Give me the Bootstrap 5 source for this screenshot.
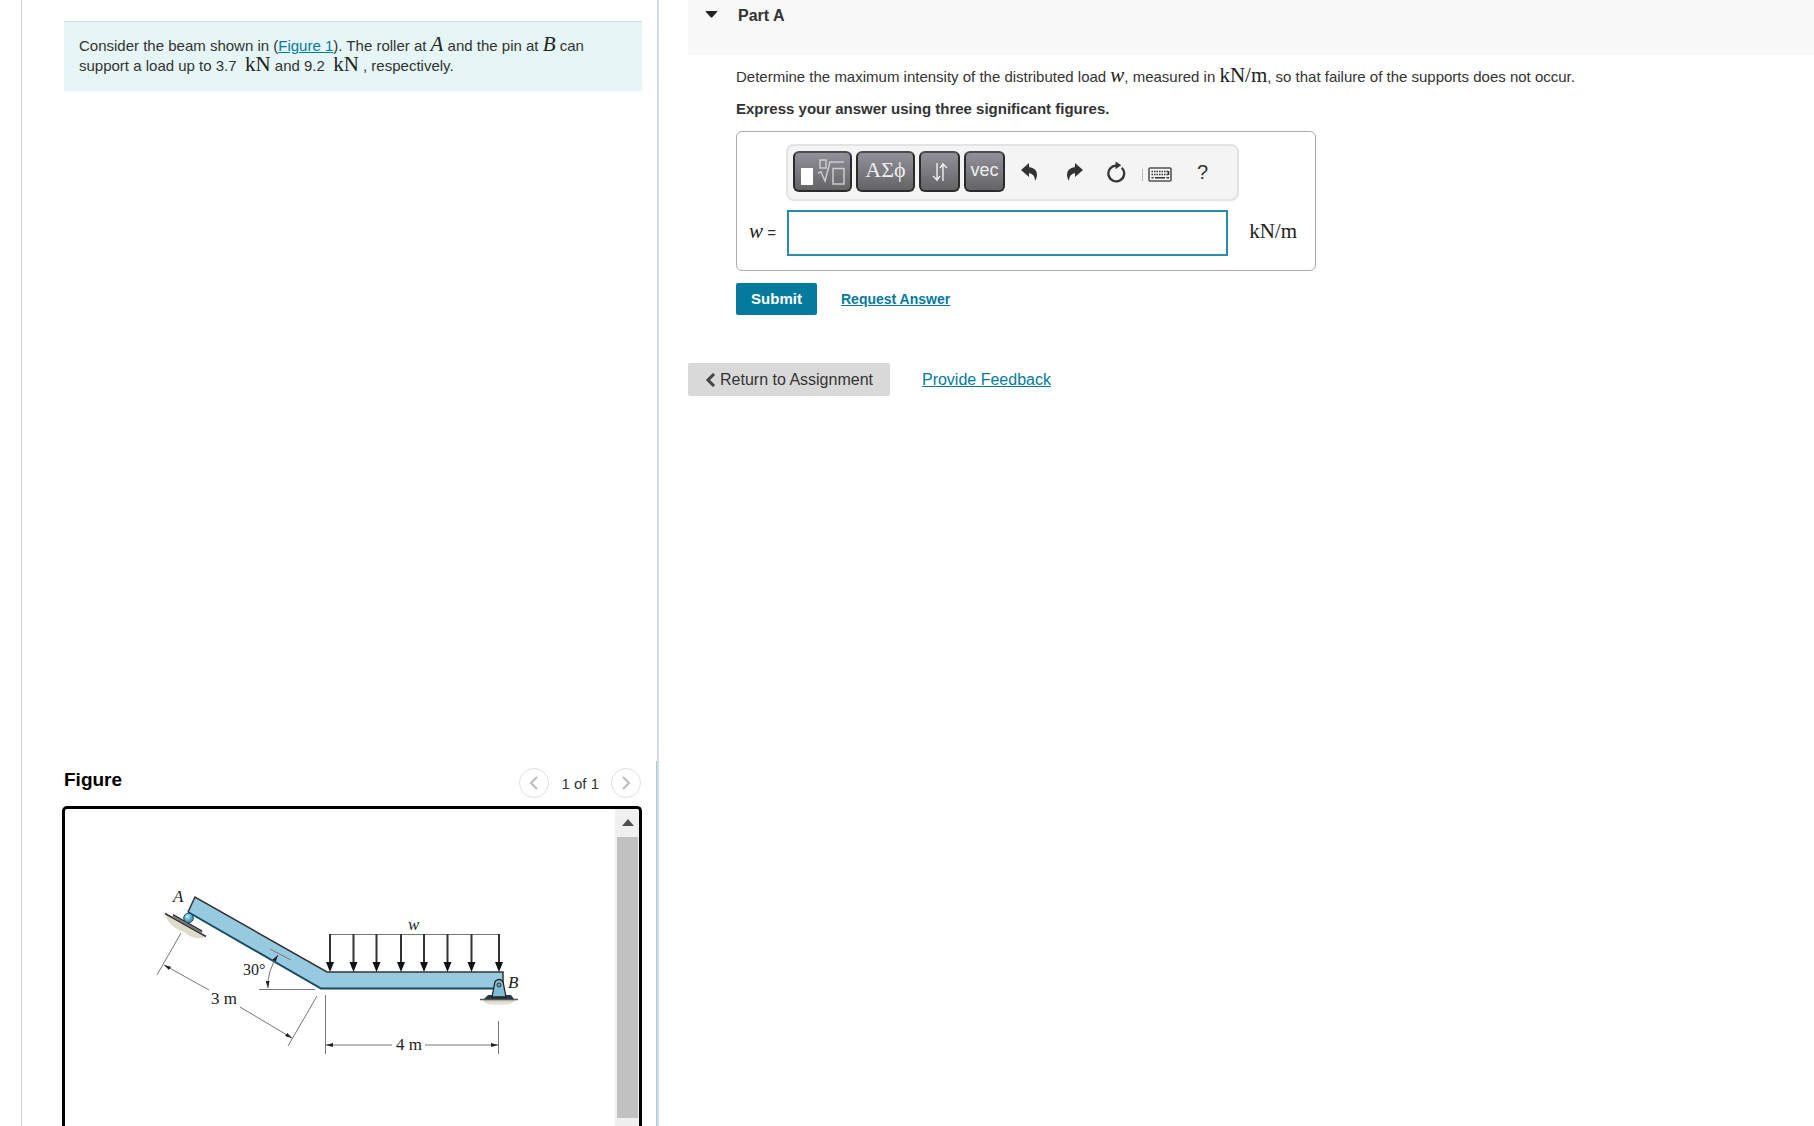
<!DOCTYPE html>
<html lang="en">
<head>
<meta charset="utf-8">
<meta name="viewport" content="width=device-width, initial-scale=1">
<title>Part A</title>
<link href="https://cdn.jsdelivr.net/npm/bootstrap@5.3.0/dist/css/bootstrap.min.css" rel="stylesheet">
<style>
body{font-family:"Liberation Sans",Arial,sans-serif;font-size:15px;line-height:20px;color:#333;background:#fff}
a{color:#047a9c}
.tex{font-family:"Liberation Serif","Times New Roman",serif;font-size:21px;line-height:16px;color:#222}
.problem-pane{flex:0 0 659px;border-right:2px solid #cfdcea;padding-left:21px}
.problem-inner{border-left:1px solid #d3d3d3;padding:21px 15px 0 42px}
.intro{background:#e6f6f7;border-top:1px solid #d5dbdc;height:70px;padding:14px 16px 0 15px}
.figure-pane{border-right:1px solid #b4c8dc;margin-right:-15px;padding:5px 14px 0 0}
.figure-title{font-size:19px;color:#000}
.round-btn{width:30px;height:30px;border:1px solid #e0e0e0;background:#fff;border-radius:50%}
.frame{border:3px solid #000;border-bottom:0;border-radius:5px 5px 0 0;margin-left:-2px;height:320px}
.frame svg.beam{margin:51px 0 0 75px}
.pager{padding:2px 1px 0 0}
.pager-text{padding:2px 4px 0}
.track{width:24px;background:#f0f0f0;padding:10px 1px 8px 2px}
.thumb{background:#c1c1c1}
.answer-pane{padding-left:29px}
.part-head{background:#f8f8f8;height:55px;padding:6px 0 0 17px;gap:20px;font-size:16px}
.part-body{padding:12px 0 0 48px}
.part-form{gap:12px}
.answer-box{width:580px;height:140px;border:1px solid #aaa;border-radius:6px;padding:12px;gap:9px}
.tools{background:#f4f4f4;border:2px solid #e3e3e3;border-radius:8px;width:453px;height:57px;margin-left:37px;padding:0 5px 2px}
.key{height:41px;width:41px;border:2px solid #2b2b2b;border-top-color:#4b4b50;border-radius:6px;background:linear-gradient(#929099,#646466);color:#eee;font-size:18px;line-height:1}
.key-wide{width:59px}
.key-tex{font-family:"Liberation Serif",serif;font-size:22px}
.tool{border:0;background:none;color:#333;font-size:20px;line-height:1}
.gap-far{margin-right:28px}
.entry{height:46px;width:441px;border:2px solid #2a8ca9;border-radius:0}
.entry-label{margin-right:11px}
.unit{margin-right:6px;padding-bottom:4px}
.submit{background:#047a9c;color:#fff;height:32px;width:81px;border-radius:2px;font-size:15px;line-height:20px}
.request{font-size:14px}
.return{background:#d9d9d9;color:#333;height:33px;border-radius:2px;font-size:16px;line-height:20px;padding:0 16px}
</style>
<script src="https://cdn.jsdelivr.net/npm/bootstrap@5.3.0/dist/js/bootstrap.bundle.min.js"></script>
</head>
<body>
<div class="d-flex vh-100 overflow-hidden">
  <section class="problem-pane vh-100">
    <div class="problem-inner h-100 d-flex flex-column">
      <div class="intro">Consider the beam shown in (<a href="#figure">Figure 1</a>). The roller at <i class="tex">A</i> and the pin at <i class="tex">B</i> can<br>support a load up to 3.7 &nbsp;<span class="tex">kN</span> and 9.2 &nbsp;<span class="tex">kN</span> , respectively.</div>
      <div class="figure-pane mt-auto" id="figure">
        <div class="d-flex align-items-center justify-content-between mb-2">
          <h2 class="figure-title fw-bold mb-1">Figure</h2>
          <div class="pager d-flex align-items-center gap-2">
            <button class="round-btn p-0 d-flex align-items-center justify-content-center" aria-label="Previous figure"><svg width="10" height="14" viewBox="0 0 10 14" fill="none" stroke="#bbb" stroke-width="2"><path d="M8 1 2 7l6 6"/></svg></button>
            <span class="pager-text">1 of 1</span>
            <button class="round-btn p-0 d-flex align-items-center justify-content-center" aria-label="Next figure"><svg width="10" height="14" viewBox="0 0 10 14" fill="none" stroke="#bbb" stroke-width="2"><path d="m2 1 6 6-6 6"/></svg></button>
          </div>
        </div>
        <div class="frame d-flex justify-content-between overflow-hidden">
          <svg class="beam" width="400" height="210" viewBox="140 860 400 210" font-family="Liberation Serif, serif" font-size="17" fill="#222" role="img" aria-label="Beam with roller at A and pin at B">
            <defs>
              <marker id="tip" viewBox="0 0 7 4" markerWidth="7" markerHeight="4" markerUnits="userSpaceOnUse" refX="7" refY="2" orient="auto-start-reverse"><path d="M0 0 7 2 0 4z" fill="#222"/></marker>
              <radialGradient id="ball" cx=".4" cy=".35"><stop offset="0" stop-color="#c4ecf8"/><stop offset="1" stop-color="#3d9bbd"/></radialGradient>
              <linearGradient id="soil" x2="0" y2="1"><stop offset="0" stop-color="#cbc8b4"/><stop offset="1" stop-color="#efede2"/></linearGradient>
            </defs>
            <path d="M165 914 205 937Q195 941 184 932 168 926 165 914z" fill="#dedbcb"/>
            <path d="M165 913.500 206 936.500" stroke="#333" stroke-width="1.500"/>
            <path d="M173 915.500 202 932" stroke="#777" stroke-width="3"/><path d="M173 914.500 202 931" stroke="#222"/>
            <path d="M195 897 327 972H503V989H321L188 912z" fill="#97c9df"/>
            <path d="M188 912 195 897 327 972H503V985" fill="none" stroke="#333" stroke-width="1.500"/>
            <path d="M188 912 321 988.500H494" fill="none" stroke="#174b60" stroke-width="2"/>
            <circle cx="188.500" cy="918" r="4.800" fill="url(#ball)" stroke="#1e4757"/>
            <g stroke="#777" fill="none">
              <path d="M181 933 157 975M317 996 288 1046M259 989.500H315M270 949 291 960M325.500 995V1054M498.500 1021V1054"/>
              <path d="M209 990 164 965" marker-end="url(#tip)"/>
              <path d="M240 1007 292 1038" marker-end="url(#tip)"/>
              <path d="M278 955Q267 971 268 988" marker-start="url(#tip)" marker-end="url(#tip)"/>
              <path d="M392 1045H326" marker-end="url(#tip)"/>
              <path d="M425 1045H498" marker-end="url(#tip)"/>
              <path d="M330 934.500H499"/>
            </g>
            <path d="M330 934V964M353.500 934V964M376.500 934V964M401 934V964M424 934V964M447.500 934V964M471.500 934V964M499 934V964" stroke="#333" stroke-width="2"/>
            <path d="M326 962h8l-4 10zM349.500 962h8l-4 10zM372.500 962h8l-4 10zM397 962h8l-4 10zM420 962h8l-4 10zM443.500 962h8l-4 10zM467.500 962h8l-4 10zM495 962h8l-4 10z" fill="#111"/>
            <path d="M482 999H516Q512 1006 499 1005 485 1006 482 999z" fill="url(#soil)"/>
            <path d="M480 999.500H518" stroke="#555" stroke-width="1.500"/>
            <path d="M484 999 488 995H511L514 999z" fill="#253b45"/>
            <path d="M492 997 494.500 984A4.500 4.500 0 0 1 503.500 984L506 997z" fill="#7fbcd6" stroke="#222" stroke-width="1.300"/>
            <circle cx="499" cy="985" r="2" fill="#88999f" stroke="#333"/>
            <text x="173" y="902" font-style="italic">A</text>
            <text x="508" y="988" font-style="italic">B</text>
            <text x="408" y="930" font-style="italic">w</text>
            <text x="243" y="975" font-size="16">30°</text>
            <text x="211" y="1004">3 m</text>
            <text x="396" y="1050">4 m</text>
          </svg>
          <div class="track d-flex flex-column gap-2" aria-hidden="true">
            <svg class="mx-auto flex-shrink-0" width="12" height="10" viewBox="0 0 12 10"><path d="M0 7 6 0l6 7z" fill="#505050"/></svg>
            <div class="thumb flex-grow-1"></div>
          </div>
        </div>
      </div>
    </div>
  </section>
  <main class="answer-pane flex-grow-1">
    <header class="part-head d-flex">
      <svg class="mt-1" width="13" height="8" viewBox="0 0 13 8" fill="#222"><path d="M1 1h11q1 0 0 1L7.500 7q-1 1-2 0L1 2q-1-1 0-1z"/></svg>
      <strong>Part A</strong>
    </header>
    <div class="part-body">
      <form class="part-form d-flex flex-column">
        <p class="mb-0">Determine the maximum intensity of the distributed load <i class="tex">w</i>, measured in <span class="tex">kN/m</span>, so that failure of the supports does not occur.</p>
        <p class="fw-bold mb-0">Express your answer using three significant figures.</p>
        <div class="answer-box d-flex flex-column">
          <div class="tools d-flex align-items-center">
            <div class="d-flex gap-1">
              <button type="button" class="key key-wide p-0" aria-label="Templates"><svg width="46" height="28" viewBox="0 0 46 28" fill="none" stroke="#ccc" stroke-width="1.500"><path fill="#fff" stroke="none" d="M1 10h12v17H1z"/><path d="M20 2h6v8h-6zM18 15l3-1 4 9 5-19h14M33 10.500h11V26H33z"/></svg></button>
              <button type="button" class="key key-wide key-tex p-0 pb-1">ΑΣϕ</button>
              <button type="button" class="key p-0" aria-label="Arrows"><svg width="16" height="20" viewBox="0 0 16 20" fill="none" stroke="#eee" stroke-width="1.400"><path d="M5 1v17M1 14l4 4V1M11 19V2l4 4M11 2 8 6M5 18l3-4"/></svg></button>
              <button type="button" class="key p-0 pb-1">vec</button>
            </div>
            <div class="d-flex align-items-center ps-3">
              <button type="button" class="tool p-0 d-flex gap-far" aria-label="Undo"><svg width="17" height="18" viewBox="0 0 17 18" fill="#333"><path d="M0 7 8 0V4Q16 5 16 12 16 15 14 18 14 11 8 10V14z"/></svg></button>
              <button type="button" class="tool p-0 d-flex me-4" aria-label="Redo"><svg width="17" height="18" viewBox="0 0 17 18" fill="#333"><path d="M17 7 9 0V4Q1 5 1 12 1 15 3 18 3 11 9 10V14z"/></svg></button>
              <button type="button" class="tool p-0 d-flex me-3" aria-label="Reset"><svg width="19" height="22" viewBox="0 0 20 22"><path d="M15.500 6.500A8.300 8.300 0 1 1 10 4.200" fill="none" stroke="#333" stroke-width="2.400"/><path d="M9 0 15 4 9 8z" fill="#333"/></svg></button>
              <button type="button" class="tool p-0 pt-1 d-flex me-4" aria-label="Keyboard"><svg width="31" height="16" viewBox="0 0 31 16" fill="none" stroke="#333"><path d="M.500 3v12" stroke="#bbb"/><rect x="7" y="2" width="22" height="13" rx="1" stroke="#555" stroke-width="1.600"/><path d="M9.500 5.500H27M9.500 8.500H27" stroke-width="1.500" stroke-dasharray="1.500 1"/><path d="M9.500 11.800h2M13 11.800h10M24.500 11.800H27M26.500 5v4" stroke-width="1.500"/></svg></button>
              <button type="button" class="tool p-0" aria-label="Help">?</button>
            </div>
          </div>
          <div class="d-flex align-items-center">
            <label for="ans" class="entry-label"><i class="tex">w</i> =</label>
            <input id="ans" type="text" class="entry" autocomplete="off">
            <label for="ans" class="tex ms-auto unit">kN/m</label>
          </div>
        </div>
        <div class="d-flex align-items-center gap-4">
          <button type="button" class="btn submit p-0 fw-bold">Submit</button>
          <a href="#answer" class="fw-bold request">Request Answer</a>
        </div>
      </form>
    </div>
    <div class="d-flex align-items-center mt-5 gap-4">
      <button type="button" class="btn return d-flex align-items-center gap-1"><svg width="11" height="14" viewBox="0 0 11 14" fill="none" stroke="#444" stroke-width="3"><path d="M9 1 3 7l6 6"/></svg>Return to Assignment</button>
      <a class="ms-2 fs-6" href="#feedback">Provide Feedback</a>
    </div>
  </main>
</div>
</body>
</html>
